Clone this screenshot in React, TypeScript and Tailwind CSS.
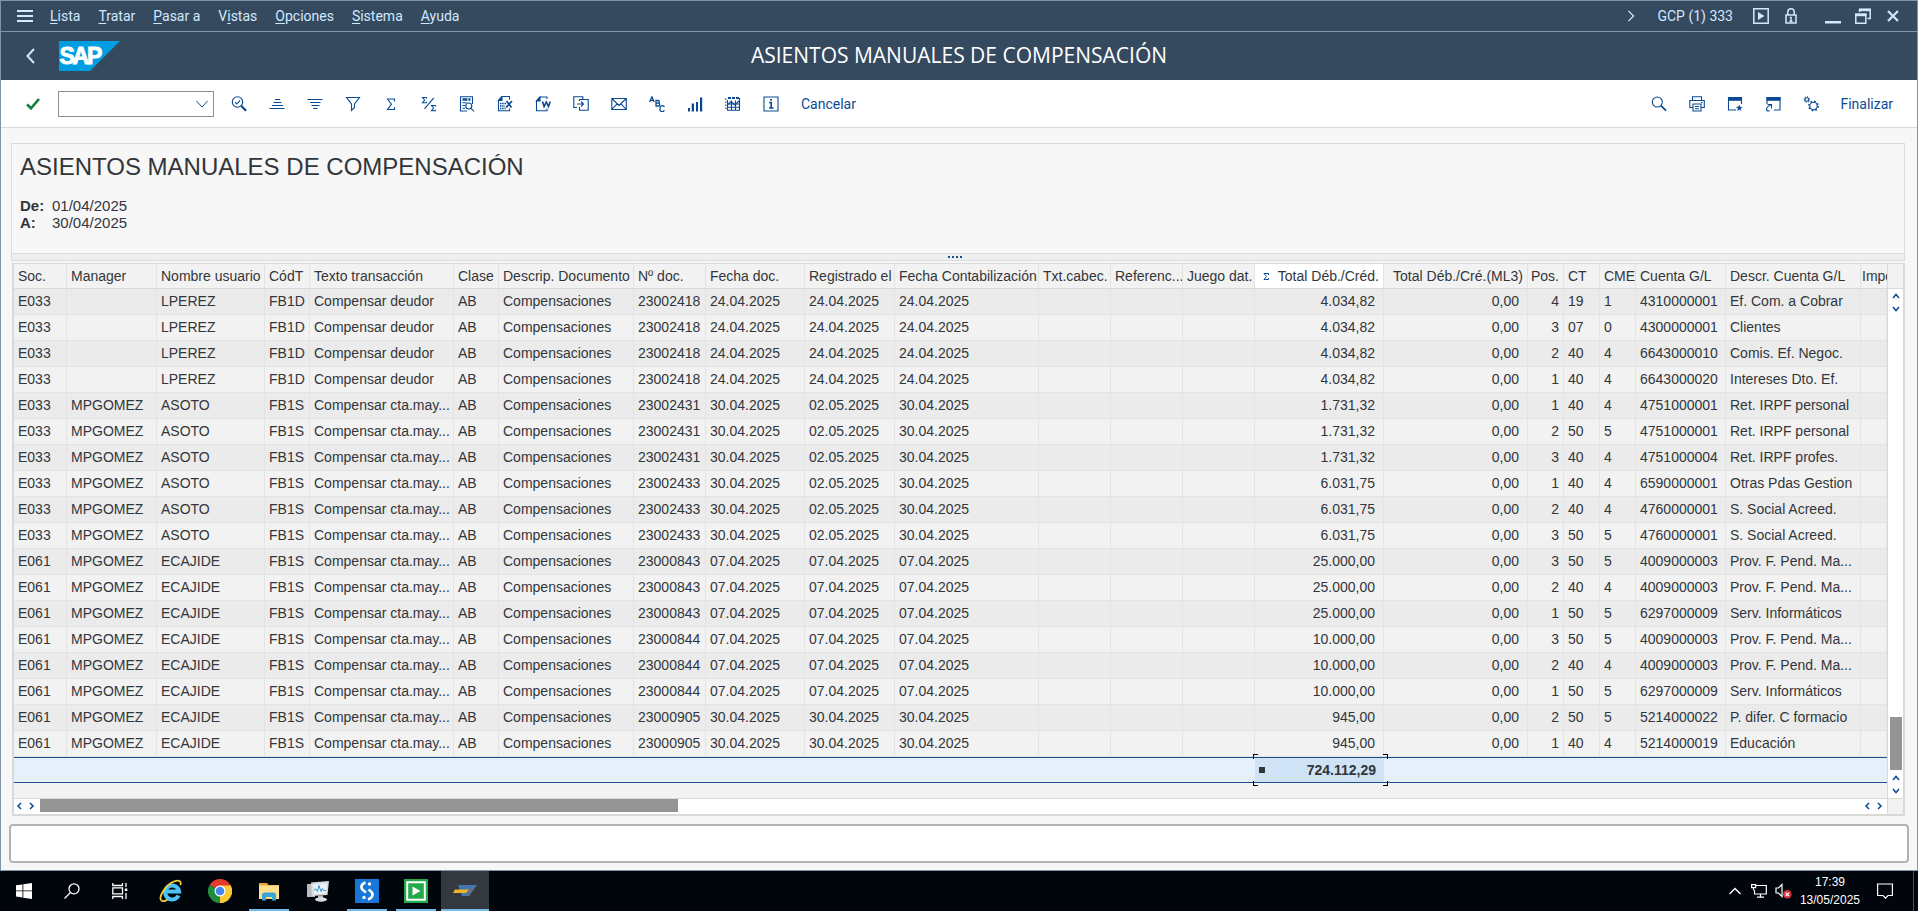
import React from "react";
import type { ReactNode } from "react";

type IconProps = { children: ReactNode; size?: string; fill?: boolean };

function Icon({ children, size = "size-4", fill = false }: IconProps) {
  return (
    <svg
      viewBox="0 0 16 16"
      className={`${size} shrink-0`}
      fill={fill ? "currentColor" : "none"}
      stroke={fill ? "none" : "currentColor"}
      strokeWidth="1.1"
      aria-hidden="true"
    >
      {children}
    </svg>
  );
}

const menus = [
  { pre: "", key: "L", post: "ista" },
  { pre: "", key: "T", post: "ratar" },
  { pre: "", key: "P", post: "asar a" },
  { pre: "V", key: "i", post: "stas" },
  { pre: "", key: "O", post: "pciones" },
  { pre: "", key: "S", post: "istema" },
  { pre: "", key: "A", post: "yuda" },
];

const leftTools: { label: string; icon: ReactNode }[] = [
  {
    label: "Detalle",
    icon: (
      <Icon>
        <circle cx="6.5" cy="6" r="5.2" />
        <path d="M4 6.2l1.8 1.8L9 4.4" />
        <path d="M10.4 10l4.6 4.8" strokeWidth="2.2" />
      </Icon>
    ),
  },
  {
    label: "Orden ascendente",
    icon: (
      <Icon>
        <path d="M6 3.5h5M4.5 6.5h8M3 9.5h11M.5 12.5h15" />
      </Icon>
    ),
  },
  {
    label: "Orden descendente",
    icon: (
      <Icon>
        <path d="M.5 3.5h15M3 6.5h10.5M4.5 9.5h8M6 12.5h4.5" />
      </Icon>
    ),
  },
  {
    label: "Filtro",
    icon: (
      <Icon>
        <path d="M1.500 1.500h13l-5 6.500v3.500l-3 3V8z" />
      </Icon>
    ),
  },
  {
    label: "Total",
    icon: (
      <Icon>
        <path d="M11.500 5.500V3h-7l4 5.200-4 5.300h7V11" />
      </Icon>
    ),
  },
  {
    label: "Subtotal",
    icon: (
      <Icon>
        <path d="M5.500 2.500V1.500h-4l2.200 2.500L1.500 6.700h4v-1M14.500 10.500v-1h-4l2.200 2.500-2.200 2.700h4v-1M12.800 1.800L3.500 12.800" />
      </Icon>
    ),
  },
  {
    label: "Vista de impresión",
    icon: (
      <Icon>
        <path d="M8 15H1.500V.8h12V8" />
        <path d="M3.500 3.500h8" strokeWidth="2.4" strokeDasharray="5 1 2" />
        <path d="M3.500 6.700h4M3.500 9.500h2.500M3.500 12.200h2.500" />
        <circle cx="9.800" cy="10" r="3" />
        <path d="M12 12.300l3 3" />
      </Icon>
    ),
  },
  {
    label: "Hoja de cálculo",
    icon: (
      <Icon>
        <path d="M8 14.800H1.500V4.500l3.500-4h7.500V3.500M12.500 12.500v2.300H8" />
        <path d="M5 .5v4H1.500z" fill="currentColor" />
        <path d="M3 7.500h6M3 10h5M3 12.500h5.500" strokeWidth="1.500" strokeDasharray="1.500 .7" />
        <path d="M9.500 5l5 6.500M15 5l-6 6.500" strokeWidth="1.700" />
      </Icon>
    ),
  },
  {
    label: "Tratamiento de textos",
    icon: (
      <Icon>
        <path d="M12 3V1H5L1.500 5v9.700H12V12.500" />
        <path d="M5 1v4H1.500z" fill="currentColor" />
        <path d="M7.500 5.500l1.600 5L11.300 6l2.200 4.500 1.700-5" strokeWidth="1.600" />
      </Icon>
    ),
  },
  {
    label: "Fichero local",
    icon: (
      <Icon>
        <path d="M4 11.500H.8V.8h9V3M6.500 5V3.500h8.700v10.700H6.500V11M4 8h6.500M8 5.500L10.500 8 8 10.500" />
      </Icon>
    ),
  },
  {
    label: "Correo",
    icon: (
      <Icon>
        <path d="M.8 2.500h14.500v11H.8zM.8 2.500L8 9.500l7.300-7M.8 13.500L6 7.800M15.300 13.500L10 7.800" />
      </Icon>
    ),
  },
  {
    label: "Análisis ABC",
    icon: (
      <Icon>
        <path d="M.6 6L2.900 .8 5.200 6M1.400 4.300h3" strokeWidth="1.300" />
        <path d="M7 4.500v5.500h2.300a1.300 1.300 0 000-2.800H7h2a1.200 1.200 0 000-2.700z" strokeWidth="1.300" />
        <path d="M15.300 11a2.100 2.100 0 00-4.100 1.700 2.100 2.100 0 004.100 1.600" strokeWidth="1.300" />
      </Icon>
    ),
  },
  {
    label: "Gráfico",
    icon: (
      <Icon fill>
        <path d="M1 12h2v3.500H1zM4.700 7.500H7v8H4.700zM9 6h2v9.500H9zM13 1.500h2.200v14H13z" />
      </Icon>
    ),
  },
  {
    label: "Disposición",
    icon: (
      <Icon>
        <path d="M2.500 4v10.300h12V2M2.500 8h12M2.500 11.200h12M6.500 4.500v10M10.500 4.500v10" />
        <path d="M.8 2.500v12" strokeDasharray="1.500 1.500" />
        <path d="M3 2h12" strokeDasharray="3 1" strokeWidth="1.800" />
        <path d="M3 8.500l3-3 4 3.500 4-4" />
      </Icon>
    ),
  },
  {
    label: "Información",
    icon: (
      <Icon>
        <path d="M1 1h14v14H1z" />
        <path d="M6 6.500h2.200V12M6 12h4.500M7 3.800h2" strokeWidth="1.600" />
      </Icon>
    ),
  },
];

const rightTools: { label: string; icon: ReactNode }[] = [
  {
    label: "Buscar",
    icon: (
      <Icon>
        <circle cx="6.300" cy="6" r="5" />
        <path d="M10 9.700l5 5" strokeWidth="1.700" />
      </Icon>
    ),
  },
  {
    label: "Imprimir",
    icon: (
      <Icon>
        <path d="M3.500 4V.8h9V4M3.500 11.500H.8V4.500h14.500v7h-2.800M4 8h8v7H4zM6 10.500h4M6 12.700h4M12 6.500h1.500" />
      </Icon>
    ),
  },
  {
    label: "Crear modo",
    icon: (
      <Icon>
        <path d="M14.500 8V1.500h-13V14H9" />
        <path d="M1 3h14" strokeWidth="3.600" />
        <path
          d="M12.300 8.500l.9 2.300 2.500.1-2 1.600.7 2.500-2.100-1.400-2.100 1.400.7-2.500-2-1.600 2.500-.1z"
          fill="currentColor"
          stroke="none"
        />
      </Icon>
    ),
  },
  {
    label: "Generar acceso directo",
    icon: (
      <Icon>
        <path d="M2 8V1.500h13V14H9M2.500 8.500h4v4M6.500 8.500C3 10 1.500 12 1.500 13.500s2 1.800 3 1" />
        <path d="M1.500 3h14" strokeWidth="3.600" />
      </Icon>
    ),
  },
  {
    label: "Ajustar disposición",
    icon: (
      <Icon>
        <circle cx="3.800" cy="3.500" r="1.800" />
        <circle cx="3.800" cy="3.500" r="2.700" strokeDasharray="1 1.100" />
        <circle cx="10.500" cy="10" r="3.700" />
        <circle cx="10.500" cy="10" r="4.700" strokeDasharray="1.700 1.990" strokeWidth="1.500" />
      </Icon>
    ),
  },
];

type Column = {
  title: string;
  width: string;
  right?: string;
  total?: boolean;
};

const columns: Column[] = [
  { title: "Soc.", width: "w-[53px]" },
  { title: "Manager", width: "w-[90px]" },
  { title: "Nombre usuario", width: "w-[108px]" },
  { title: "CódT", width: "w-[45px]" },
  { title: "Texto transacción", width: "w-[144px]" },
  { title: "Clase", width: "w-[45px]" },
  { title: "Descrip. Documento", width: "w-[135px]" },
  { title: "Nº doc.", width: "w-[72px]" },
  { title: "Fecha doc.", width: "w-[99px]" },
  { title: "Registrado el", width: "w-[90px]" },
  { title: "Fecha Contabilización", width: "w-[144px]" },
  { title: "Txt.cabec.", width: "w-[72px]" },
  { title: "Referenc...", width: "w-[72px]" },
  { title: "Juego dat.", width: "w-[72px]" },
  { title: "Total Déb./Créd.", width: "w-[129px]", right: "pr-2", total: true },
  { title: "Total Déb./Cré.(ML3)", width: "w-[144px]", right: "pr-2" },
  { title: "Pos.", width: "w-[36px]", right: "pr-1" },
  { title: "CT", width: "w-[36px]" },
  { title: "CME", width: "w-[36px]" },
  { title: "Cuenta G/L", width: "w-[90px]" },
  { title: "Descr. Cuenta G/L", width: "w-[135px]" },
  { title: "Importe", width: "" },
];

type Entry = {
  soc: string;
  manager: string;
  user: string;
  tcode: string;
  doc: string;
  date: string;
  registered: string;
  amount: string;
  items: [string, string, string, string, string][];
};

const entries: Entry[] = [
  {
    soc: "E033", manager: "", user: "LPEREZ", tcode: "FB1D", doc: "23002418",
    date: "24.04.2025", registered: "24.04.2025", amount: "4.034,82",
    items: [
      ["4", "19", "1", "4310000001", "Ef. Com. a Cobrar"],
      ["3", "07", "0", "4300000001", "Clientes"],
      ["2", "40", "4", "6643000010", "Comis. Ef. Negoc."],
      ["1", "40", "4", "6643000020", "Intereses Dto. Ef."],
    ],
  },
  {
    soc: "E033", manager: "MPGOMEZ", user: "ASOTO", tcode: "FB1S", doc: "23002431",
    date: "30.04.2025", registered: "02.05.2025", amount: "1.731,32",
    items: [
      ["1", "40", "4", "4751000001", "Ret. IRPF personal"],
      ["2", "50", "5", "4751000001", "Ret. IRPF personal"],
      ["3", "40", "4", "4751000004", "Ret. IRPF profes."],
    ],
  },
  {
    soc: "E033", manager: "MPGOMEZ", user: "ASOTO", tcode: "FB1S", doc: "23002433",
    date: "30.04.2025", registered: "02.05.2025", amount: "6.031,75",
    items: [
      ["1", "40", "4", "6590000001", "Otras Pdas Gestion"],
      ["2", "40", "4", "4760000001", "S. Social Acreed."],
      ["3", "50", "5", "4760000001", "S. Social Acreed."],
    ],
  },
  {
    soc: "E061", manager: "MPGOMEZ", user: "ECAJIDE", tcode: "FB1S", doc: "23000843",
    date: "07.04.2025", registered: "07.04.2025", amount: "25.000,00",
    items: [
      ["3", "50", "5", "4009000003", "Prov. F. Pend. Ma..."],
      ["2", "40", "4", "4009000003", "Prov. F. Pend. Ma..."],
      ["1", "50", "5", "6297000009", "Serv. Informáticos"],
    ],
  },
  {
    soc: "E061", manager: "MPGOMEZ", user: "ECAJIDE", tcode: "FB1S", doc: "23000844",
    date: "07.04.2025", registered: "07.04.2025", amount: "10.000,00",
    items: [
      ["3", "50", "5", "4009000003", "Prov. F. Pend. Ma..."],
      ["2", "40", "4", "4009000003", "Prov. F. Pend. Ma..."],
      ["1", "50", "5", "6297000009", "Serv. Informáticos"],
    ],
  },
  {
    soc: "E061", manager: "MPGOMEZ", user: "ECAJIDE", tcode: "FB1S", doc: "23000905",
    date: "30.04.2025", registered: "30.04.2025", amount: "945,00",
    items: [
      ["2", "50", "5", "5214000022", "P. difer. C formacio"],
      ["1", "40", "4", "5214000019", "Educación"],
    ],
  },
];

const rows: string[][] = entries.flatMap((e) =>
  e.items.map(([pos, ct, cme, account, description]) => [
    e.soc,
    e.manager,
    e.user,
    e.tcode,
    e.tcode === "FB1D" ? "Compensar deudor" : "Compensar cta.may...",
    "AB",
    "Compensaciones",
    e.doc,
    e.date,
    e.registered,
    e.date,
    "",
    "",
    "",
    e.amount,
    "0,00",
    pos,
    ct,
    cme,
    account,
    description,
    "",
  ]),
);

function MenuBar() {
  return (
    <div className="flex h-[31px] items-center border-b border-[#8396a8] pr-[18px] pb-px pl-4 text-sm text-[#d1e8ff]">
      <button type="button" aria-label="Menú" className="mr-[17px]">
        <svg viewBox="0 0 16 12" className="h-3 w-4" fill="currentColor" aria-hidden="true">
          <path d="M0 0h16v2H0zM0 5h16v2H0zM0 10h16v2H0z" />
        </svg>
      </button>
      <nav className="flex gap-[18px]">
        {menus.map((m) => (
          <button type="button" key={m.pre + m.key + m.post} className="leading-5">
            {m.pre}
            <span className="underline underline-offset-2">{m.key}</span>
            {m.post}
          </button>
        ))}
      </nav>
      <div className="ml-auto flex items-center">
        <svg viewBox="0 0 8 14" className="mr-[22px] h-3 w-2" fill="none" stroke="currentColor" strokeWidth="1.500" aria-hidden="true">
          <path d="M1 1l6 6-6 6" />
        </svg>
        <span className="mr-5">GCP (1) 333</span>
        <button type="button" aria-label="Ejecutar" className="mr-4">
          <Icon>
            <path d="M.8 .8h14.400v14.400H.8z" strokeWidth="1.500" />
            <path d="M5 4v8l6.500-4z" fill="currentColor" stroke="none" />
          </Icon>
        </button>
        <button type="button" aria-label="Bloqueo" className="mr-[28px]">
          <svg viewBox="0 0 12 16" className="h-4 w-3" fill="none" stroke="currentColor" strokeWidth="1.500" aria-hidden="true">
            <path d="M1 7h10v8H1zM2.800 7V4a3.200 3.200 0 016.400 0v3" />
            <path d="M6 9v4.500M4.500 13.200h3M4.800 9.500h2" />
          </svg>
        </button>
        <button type="button" aria-label="Minimizar" className="mr-[14px]">
          <Icon fill>
            <path d="M0 13h16v2.500H0z" />
          </Icon>
        </button>
        <button type="button" aria-label="Restaurar" className="mr-4">
          <Icon>
            <path d="M.8 6.500h10v8.700H.8z" strokeWidth="1.500" />
            <path d="M0 6.800h11.500" strokeWidth="2.800" />
            <path d="M4.500 4V2h10.700v8.500h-2.700" strokeWidth="1.500" />
            <path d="M4 1.800h12" strokeWidth="2.800" />
          </Icon>
        </button>
        <button type="button" aria-label="Cerrar">
          <svg viewBox="0 0 12 12" className="size-3" fill="none" stroke="currentColor" strokeWidth="2.200" aria-hidden="true">
            <path d="M1 1l10 10M11 1L1 11" />
          </svg>
        </button>
      </div>
    </div>
  );
}

function TitleBar() {
  return (
    <header className="grid h-12 grid-cols-[1fr_auto_1fr] items-center">
      <div className="flex items-center pl-[25px]">
        <button type="button" aria-label="Atrás" className="mr-6 text-[#d1e8ff]">
          <svg viewBox="0 0 9 16" className="h-4 w-[9px]" fill="none" stroke="currentColor" strokeWidth="2" aria-hidden="true">
            <path d="M8 1L1.500 8 8 15" />
          </svg>
        </button>
        <svg viewBox="0 0 61 30" className="h-[30px] w-[61px]" role="img" aria-label="SAP">
          <path d="M0 0h61L31 30H0z" fill="#009de0" />
          <text y="23.400" fill="#fff" stroke="#fff" strokeWidth=".9" fontFamily="Liberation Sans, sans-serif" fontSize="23" fontWeight="700">
            <tspan x="0.500">S</tspan>
            <tspan x="13.500">A</tspan>
            <tspan x="28">P</tspan>
          </text>
        </svg>
      </div>
      <h1 className="font-['Open_Sans','Noto_Sans',sans-serif] text-[21px] text-white">ASIENTOS MANUALES DE COMPENSACIÓN</h1>
      <div />
    </header>
  );
}

function Toolbar() {
  return (
    <div className="flex h-12 items-center border-b border-[#d5dadd] bg-white text-sm text-[#0a4a94]">
      <button type="button" aria-label="Aceptar" className="flex w-[57px] justify-center pl-1.5 text-[#107e3e]">
        <svg viewBox="0 0 14 12" className="h-3 w-3.5" fill="none" stroke="currentColor" strokeWidth="2.600" aria-hidden="true">
          <path d="M1 6.500l4 3.800L13 1" />
        </svg>
      </button>
      <div className="flex h-[26px] w-[156px] items-center border border-[#89919a] bg-white pr-1">
        <input type="text" aria-label="Comando" className="h-full min-w-0 flex-1 px-2 outline-none" />
        <button type="button" aria-label="Abrir lista">
          <svg viewBox="0 0 12 8" className="mr-px h-2 w-3" fill="none" stroke="currentColor" strokeWidth="1" aria-hidden="true">
            <path d="M.5 1l5.500 6 5.500-6" />
          </svg>
        </button>
      </div>
      <div className="ml-1.5 flex">
        {leftTools.map((t) => (
          <button type="button" key={t.label} aria-label={t.label} className="flex w-[38px] justify-center">
            {t.icon}
          </button>
        ))}
      </div>
      <button type="button" className="ml-[11px]">Cancelar</button>
      <div className="ml-auto flex">
        {rightTools.map((t) => (
          <button type="button" key={t.label} aria-label={t.label} className="flex w-[38px] justify-center">
            {t.icon}
          </button>
        ))}
      </div>
      <button type="button" className="mr-6 ml-2.5">Finalizar</button>
    </div>
  );
}

function Chevron({ d, label }: { d: string; label: string }) {
  return (
    <button type="button" aria-label={label} className="flex h-[13px] w-3 shrink-0 items-center justify-center bg-white text-[#0a4a94]">
      <svg viewBox="0 0 8 8" className="size-2" fill="none" stroke="currentColor" strokeWidth="1.500" aria-hidden="true">
        <path d={d} />
      </svg>
    </button>
  );
}

const UP = "M1 6l3-3.500L7 6";
const DOWN = "M1 2l3 3.500L7 2";
const LEFT = "M5 1L2 4l3 3";
const RIGHT = "M2 1l3 3-3 3";

function EntriesTable() {
  return (
    <table className="w-full table-fixed border-separate border-spacing-0 text-sm leading-5 text-[#32363a]">
      <colgroup>
        {columns.map((c) => (
          <col key={c.title} className={c.width} />
        ))}
      </colgroup>
      <thead>
        <tr className="bg-[#f2f2f2]">
          {columns.map((c) => (
            <th
              key={c.title}
              scope="col"
              className={`h-[26px] overflow-hidden border-t border-b border-t-[#d9d9d9] border-r-[#e3e3e3] border-b-[#d9d9d9] p-0 font-normal whitespace-nowrap ${
                c.right ? "border-r pr-1 text-right" : c.width ? "border-r pl-1 text-left" : "pl-px text-left"
              } ${c.total ? "bg-white" : ""}`}
            >
              {c.total ? (
                <span className="flex items-center justify-between pl-2">
                  <svg viewBox="0 0 6 7" className="h-[7px] w-1.5" fill="none" stroke="#0a4a94" aria-hidden="true">
                    <path d="M5.500 2V.5H1L3.500 3.500 1 6.500h4.500V5" />
                  </svg>
                  {c.title}
                </span>
              ) : (
                c.title
              )}
            </th>
          ))}
        </tr>
      </thead>
      <tbody>
        {rows.map((row, r) => (
          <tr key={r} className="odd:bg-[#ebebeb] even:bg-[#f2f2f2]">
            {row.map((cell, i) => (
              <td
                key={i}
                className={`h-[26px] overflow-hidden border-r border-b border-[#e4e4e4] p-0 pb-0.5 whitespace-nowrap ${
                  columns[i].right ? `text-right ${columns[i].right}` : "pl-1"
                }`}
              >
                {cell}
              </td>
            ))}
          </tr>
        ))}
      </tbody>
      <tfoot>
        <tr className="bg-[#e5f0fa]">
          <td colSpan={14} className="h-[26px] border-y border-[#1b4f8c] p-0" />
          <td className="relative h-[26px] border-y border-[#1b4f8c] bg-[#cfe2f6] p-0 pr-2 font-bold">
            <span className="flex items-center justify-between pl-1">
              <span className="size-1.5 bg-[#32363a]" />
              724.112,29
            </span>
            <span className="absolute -top-1 -left-0.5 h-[5px] w-[5px] border-t border-l border-black" />
            <span className="absolute -top-1 -right-1 h-[5px] w-[5px] border-t border-r border-black" />
            <span className="absolute -bottom-1 -left-0.5 h-[5px] w-[5px] border-b border-l border-black" />
            <span className="absolute -right-1 -bottom-1 h-[5px] w-[5px] border-r border-b border-black" />
          </td>
          <td colSpan={7} className="h-[26px] border-y border-[#1b4f8c] p-0" />
        </tr>
      </tfoot>
    </table>
  );
}

function Grid() {
  return (
    <div className="mt-[2px] ml-px flex flex-1 flex-col border-2 border-t-0 border-[#d9d9d9] bg-[#f2f2f2]">
      <div className="flex flex-1">
        <div className="min-w-0 flex-1">
          <EntriesTable />
        </div>
        <div className="flex w-4 flex-col border-l border-[#d9d9d9]">
          <div className="h-[26px] border-t border-b border-[#d9d9d9]" />
          <div className="flex flex-1 flex-col items-center bg-white pb-px">
            <Chevron d={UP} label="Línea arriba" />
            <Chevron d={DOWN} label="Línea abajo" />
            <div className="flex-1" />
            <div className="mb-px h-[53px] w-3 bg-[#949494]" />
            <Chevron d={UP} label="Página arriba" />
            <Chevron d={DOWN} label="Página abajo" />
          </div>
        </div>
      </div>
      <div className="flex h-4 border-t border-[#d9d9d9]">
        <div className="flex min-w-0 flex-1 items-start bg-white pr-px">
          <Chevron d={LEFT} label="Columna izquierda" />
          <Chevron d={RIGHT} label="Columna derecha" />
          <div className="ml-0.5 min-w-0 flex-1">
            <div className="h-[13px] w-[35%] bg-[#949494]" />
          </div>
          <Chevron d={LEFT} label="Página izquierda" />
          <Chevron d={RIGHT} label="Página derecha" />
        </div>
        <div className="w-4 border-l border-[#d9d9d9]" />
      </div>
    </div>
  );
}

function TaskButton({ label, state, children }: { label: string; state?: "open" | "active"; children: ReactNode }) {
  return (
    <button
      type="button"
      aria-label={label}
      className={`flex h-10 w-12 flex-col items-center ${state === "active" ? "bg-[#33393e]" : ""}`}
    >
      <span className="flex flex-1 items-center pt-0.5">{children}</span>
      <span className={`h-0.5 ${state === "active" ? "w-12 bg-[#76b9ed]" : state === "open" ? "w-10 bg-[#76b9ed]" : "w-10"}`} />
    </button>
  );
}

function Taskbar() {
  return (
    <footer className="flex h-10 items-center bg-[#01050c] text-white">
      <TaskButton label="Inicio">
        <Icon fill>
          <path d="M0 2.300L6.500 1.400v6.100H0zM7.300 1.300L16 0v7.500H7.300zM0 8.300h6.500v6.200L0 13.600zM7.300 8.300H16V16l-8.700-1.300z" />
        </Icon>
      </TaskButton>
      <TaskButton label="Buscar">
        <Icon>
          <circle cx="10" cy="5.800" r="5" strokeWidth="1.300" />
          <path d="M6.500 9.500L.5 15.500" strokeWidth="1.300" />
        </Icon>
      </TaskButton>
      <TaskButton label="Vista de tareas">
        <Icon>
          <path d="M.8 0v2.500h9.700V0M.8 16v-2.500h9.700V16M.8 4.800h9.700v6H.8zM14 0v4M14 10v6" strokeWidth="1.300" />
          <path d="M12.800 5.500h2.500V8h-2.500z" fill="currentColor" stroke="none" />
        </Icon>
      </TaskButton>
      <div className="ml-[3px] flex gap-px">
        <TaskButton label="Internet Explorer">
          <svg viewBox="0 0 24 24" className="size-6" fill="none" aria-hidden="true">
            <path d="M19.500 16.500a7 7 0 11.600-4H6.500" stroke="#4cc3f4" strokeWidth="4" />
            <path d="M2.500 21.500C-1 18.500 6 6 15 2.500c5-2 7.500-.5 6.500 3.500" stroke="#f7cf3a" strokeWidth="1.800" />
            <path d="M2.500 21.500c1.500 1.200 4 .5 6-1" stroke="#f7cf3a" strokeWidth="1.800" />
          </svg>
        </TaskButton>
        <TaskButton label="Chrome">
          <svg viewBox="0 0 24 24" className="size-6" aria-hidden="true">
            <path d="M12 12L1.600 6A12 12 0 0122.400 6z" fill="#e33b2e" />
            <path d="M12 12l10.400-6A12 12 0 0112 24z" fill="#fcc934" />
            <path d="M12 12v12A12 12 0 011.600 6z" fill="#1e8e3e" />
            <path d="M12 6.500h10.600A12 12 0 0112 24l4.800-9.300z" fill="#fcc934" />
            <circle cx="12" cy="12" r="5.500" fill="#fff" />
            <circle cx="12" cy="12" r="4.300" fill="#4285f4" />
          </svg>
        </TaskButton>
        <TaskButton label="Explorador de archivos" state="open">
          <svg viewBox="0 0 22 19" className="h-[19px] w-[22px]" aria-hidden="true">
            <path d="M1 1h8l1.500 2H21v5H1z" fill="#e8a33d" />
            <path d="M2 3.500h19V17H1V3z" fill="#fde08d" />
            <path d="M4 18.500V13q0-2.500 2.500-2.500h9q2.500 0 2.500 2.500v5.500h-4V15H8v3.500z" fill="#3ba3d8" />
          </svg>
        </TaskButton>
        <TaskButton label="Monitor">
          <svg viewBox="0 0 22 22" className="size-[22px]" aria-hidden="true">
            <path d="M0 4h8v13H0z" fill="#b9bdc0" />
            <path d="M4 2.500L22 1l-1.500 14L5 16z" fill="#d9dcde" />
            <path d="M6 4.500L20 3.300l-1 10L7 14z" fill="#eaf4fb" />
            <path d="M7 10l2-1 1.500 2.500L12 5.500l2 6 1.500-3 1 2h2.500" stroke="#3c8fc9" fill="none" />
            <path d="M11 15.500h5V18h-5z" fill="#b9bdc0" />
            <ellipse cx="14" cy="19.500" rx="6" ry="2.200" fill="#d9dcde" />
          </svg>
        </TaskButton>
        <TaskButton label="Aplicación" state="open">
          <svg viewBox="0 0 24 24" className="size-6" fill="none" aria-hidden="true">
            <path d="M0 0h24v24H0z" fill="#1677d8" />
            <path d="M10.500 3.500C6 5 5 9 8.500 11.500L11 13.500M13.500 10.500l2.500 2c3 3 1.500 6.500-3 8" stroke="#fff" strokeWidth="2.600" />
            <circle cx="14.500" cy="5" r="1.700" fill="#fff" />
            <circle cx="9" cy="18.500" r="1.700" fill="#fff" />
          </svg>
        </TaskButton>
        <TaskButton label="Reproductor" state="open">
          <svg viewBox="0 0 24 24" className="size-6" aria-hidden="true">
            <path d="M0 0h24v24H0z" fill="#23a84a" />
            <path d="M3.200 3.200h17.600v17.600H3.200z" fill="none" stroke="#fff" strokeWidth="2" />
            <path d="M8.500 7.500v9l8-4.500z" fill="#fff" />
          </svg>
        </TaskButton>
        <TaskButton label="SAP GUI" state="active">
          <svg viewBox="0 0 24 12" className="h-3 w-6" aria-hidden="true">
            <path d="M5 0h19l-8 11H9z" fill="#4377ad" />
            <path d="M15 3h6l-5 8h-3z" fill="#5c7288" />
            <path d="M2 4.500h14L13 8H0z" fill="#f0b429" />
          </svg>
        </TaskButton>
      </div>
      <div className="ml-auto flex items-center">
        <svg viewBox="0 0 12 8" className="mr-2.5 h-2 w-3" fill="none" stroke="currentColor" strokeWidth="1.400" aria-hidden="true">
          <path d="M.5 7L6 1.500 11.500 7" />
        </svg>
        <svg viewBox="0 0 16 14" className="mr-2 h-3.5 w-4" fill="none" stroke="currentColor" strokeWidth="1.200" aria-hidden="true">
          <path d="M4 1.500h11.300v8.500H3.500V6M9.500 10v3M6 13.200h7M.6 .6h4v3h-4zM2.500 3.600v2.600" />
        </svg>
        <svg viewBox="0 0 17 16" className="mr-2 h-4 w-[17px]" fill="none" aria-hidden="true">
          <path d="M1 5h2.500L7 1.500v12L3.500 10H1z" stroke="#fff" strokeWidth="1.200" />
          <circle cx="12.300" cy="11.300" r="4.300" fill="#d9303c" />
          <path d="M10.600 9.600l3.400 3.400M14 9.600l-3.400 3.400" stroke="#fff" strokeWidth="1.200" />
        </svg>
        <div className="mr-[17px] text-center text-xs leading-[18px]">
          <div>17:39</div>
          <div>13/05/2025</div>
        </div>
        <svg viewBox="0 0 16 16" className="mr-5 size-4" fill="none" stroke="currentColor" strokeWidth="1.200" aria-hidden="true">
          <path d="M.6 1h14.800v11.500H11l-2.500 2.700-2.500-2.700H.6z" />
        </svg>
        <div className="h-10 border-l border-[#4a4f55] pl-1" />
      </div>
    </footer>
  );
}

export default function App() {
  return (
    <div className="flex min-h-screen flex-col bg-[#f7f7f7] font-['Liberation_Sans',Arial,sans-serif]">
      <div className="flex flex-1 flex-col border border-[#7f93aa]">
        <div className="bg-[#354a5f] font-[Roboto,'Noto_Sans',sans-serif]">
          <MenuBar />
          <TitleBar />
          <Toolbar />
        </div>
        <main className="flex flex-1 flex-col pt-[15px]">
          <div className="mr-3 ml-2.5 flex flex-1 flex-col">
            <section className="h-[111px] border border-[#d9dcde] px-2 text-[#32363a]">
              <h2 className="mt-[7px] text-2xl">ASIENTOS MANUALES DE COMPENSACIÓN</h2>
              <dl className="mt-[14px] grid grid-cols-[32px_1fr] text-[15px] leading-[17px]">
                <dt className="font-bold">De:</dt>
                <dd>01/04/2025</dd>
                <dt className="font-bold">A:</dt>
                <dd>30/04/2025</dd>
              </dl>
            </section>
            <div className="flex h-[7px] items-center justify-center gap-0.5 border-x border-b border-[#d9dcde] bg-[#efefef] pr-1.5">
              <span className="size-0.5 bg-[#1b4f8c]" />
              <span className="size-0.5 bg-[#1b4f8c]" />
              <span className="size-0.5 bg-[#1b4f8c]" />
              <span className="size-0.5 bg-[#1b4f8c]" />
            </div>
            <Grid />
          </div>
          <div role="status" className="mx-2 mt-2 mb-[7px] h-[39px] rounded border-2 border-[#b3b3b3] bg-white" />
        </main>
      </div>
      <Taskbar />
    </div>
  );
}
